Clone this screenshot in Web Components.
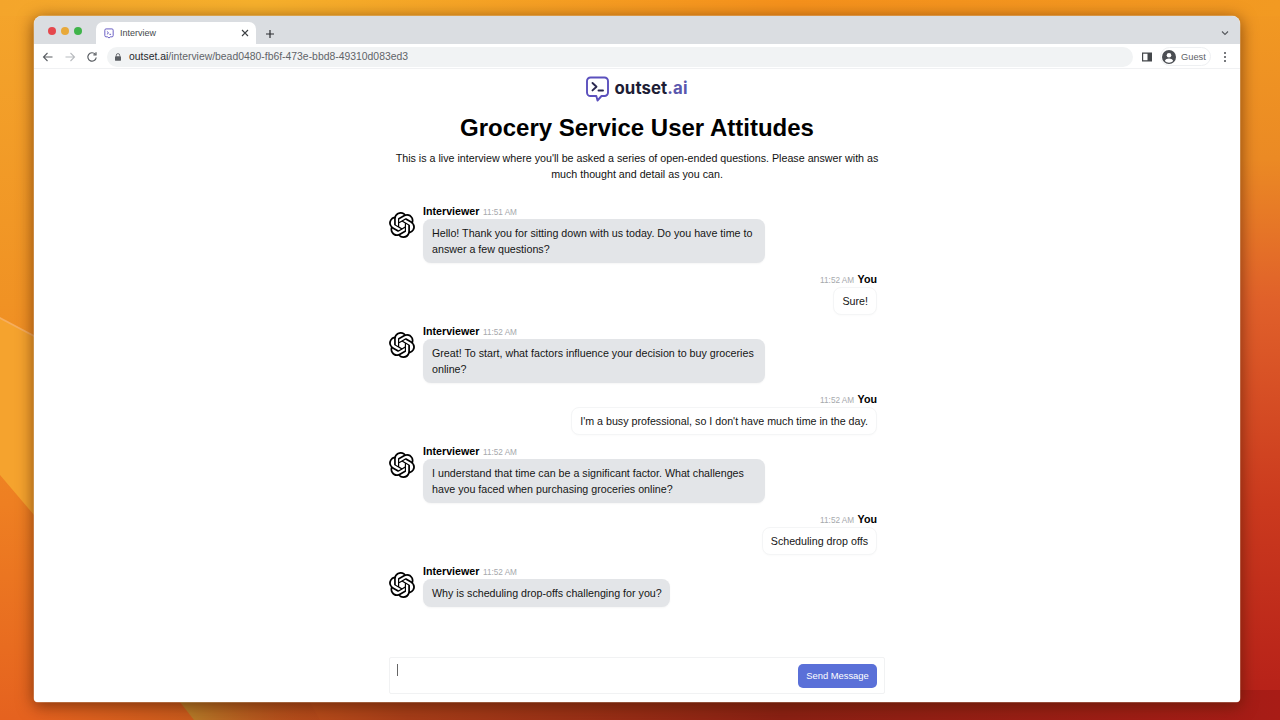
<!DOCTYPE html>
<html><head><meta charset="utf-8"><title>Interview</title>
<style>
html,body{margin:0;padding:0;height:100%;overflow:hidden;font-family:"Liberation Sans",Arial,sans-serif}
</style></head><body>
<x-desktop>
  <x-browser>
    <x-page>
      <x-logo></x-logo>
      <x-intro heading="Grocery Service User Attitudes">This is a live interview where you'll be asked a series of open-ended questions. Please answer with as much thought and detail as you can.</x-intro>
      <x-chat>
        <x-msg time="11:51 AM">Hello! Thank you for sitting down with us today. Do you have time to answer a few questions?</x-msg>
        <x-msg user time="11:52 AM">Sure!</x-msg>
        <x-msg time="11:52 AM">Great! To start, what factors influence your decision to buy groceries online?</x-msg>
        <x-msg user time="11:52 AM">I'm a busy professional, so I don't have much time in the day.</x-msg>
        <x-msg time="11:52 AM">I understand that time can be a significant factor. What challenges have you faced when purchasing groceries online?</x-msg>
        <x-msg user time="11:52 AM">Scheduling drop offs</x-msg>
        <x-msg time="11:52 AM">Why is scheduling drop-offs challenging for you?</x-msg>
      </x-chat>
      <x-composer></x-composer>
    </x-page>
  </x-browser>
</x-desktop>
<script>
function def(name,html,init){customElements.define(name,class extends HTMLElement{
  constructor(){super();const s=this.attachShadow({mode:'open'});s.innerHTML=html;}
  connectedCallback(){if(init)init(this,this.shadowRoot);}
});}
const FONT='"Liberation Sans",Arial,sans-serif';
def('x-desktop',`<style>
:host{display:block;position:relative;width:1280px;height:720px;overflow:hidden;background:#e8781e}
svg{position:absolute;inset:0;width:100%;height:100%}
</style>
<svg viewBox="0 0 1280 720" preserveAspectRatio="none">
<defs>
<linearGradient id="t" x1="0" y1="0" x2="1" y2="0"><stop offset="0" stop-color="#f4a52b"/><stop offset=".2" stop-color="#f6b02c"/><stop offset=".62" stop-color="#f5911c"/><stop offset="1" stop-color="#f29a22"/></linearGradient>
<linearGradient id="a" x1="0" y1="0" x2="0" y2="1"><stop offset="0" stop-color="#f4a52b"/><stop offset=".42" stop-color="#f09224"/><stop offset=".7" stop-color="#ee7f22"/><stop offset="1" stop-color="#e5621f"/></linearGradient>
<linearGradient id="r" x1="0" y1="0" x2="0" y2="1"><stop offset="0" stop-color="#f29a22"/><stop offset=".22" stop-color="#eb8a24"/><stop offset=".42" stop-color="#e0602a"/><stop offset=".7" stop-color="#cb3a1e"/><stop offset="1" stop-color="#b41e18"/></linearGradient>
<linearGradient id="b" x1="0" y1="0" x2="1" y2="0"><stop offset="0" stop-color="#e5621f"/><stop offset=".14" stop-color="#c65a1c"/><stop offset=".3" stop-color="#a63d18"/><stop offset=".6" stop-color="#8a2013"/><stop offset="1" stop-color="#a81c16"/></linearGradient>
<linearGradient id="g" x1="0" y1="0" x2="1" y2="0"><stop offset="0" stop-color="#b5822a"/><stop offset="1" stop-color="#a63d18" stop-opacity=".2"/></linearGradient>
</defs>
<rect width="1280" height="720" fill="url(#a)"/>
<rect x="1100" width="180" height="720" fill="url(#r)"/>
<rect width="1280" height="16" fill="url(#t)"/>
<rect x="34" y="690" width="1246" height="30" fill="url(#b)"/>
<polygon points="0,318 34,336 34,515 0,475" fill="#f5a32e"/>
<polygon points="0,317 34,335 34,337 0,319" fill="#f6ae5e"/>
<polygon points="180,702 310,702 320,720 194,720" fill="url(#g)"/>
</svg><slot></slot>`);
def('x-browser',`<style>
:host{display:flex;flex-direction:column;position:absolute;left:34px;top:16px;width:1206px;height:686px;background:#fff;border-radius:8px 8px 4px 4px;overflow:hidden;box-shadow:0 0 0 .5px rgba(255,240,220,.45),0 3px 16px 1px rgba(70,25,0,.6)}
</style><x-tabstrip></x-tabstrip><x-toolbar></x-toolbar><slot></slot>`);
def('x-tabstrip',`<style>
:host{display:flex;align-items:flex-end;height:28px;background:#dadde1;flex:none;position:relative;font:9px ${FONT};color:#45484c}
.lights{display:flex;gap:5px;padding:0 0 0 14px;align-self:flex-start;margin-top:11px;width:48px;box-sizing:content-box}
.lights i{width:8px;height:8px;border-radius:50%}
.tab{width:160px;height:22px;background:#fff;border-radius:7px 7px 0 0;display:flex;align-items:center;padding:0 7px 0 8px;box-sizing:border-box;gap:6px}
.tab span{flex:1}
.plus{margin:0 0 3px 7px;width:14px;height:14px}
.chev{margin:0 10px 6px auto;width:10px;height:10px}
</style>
<div class="lights"><i style="background:#e5484d"></i><i style="background:#e8a93a"></i><i style="background:#3fb44a"></i></div>
<div class="tab"><svg width="10" height="11" viewBox="0 0 24 26" fill="none" stroke="#6a5fc4" stroke-width="2.4"><path d="M5 2h14a3 3 0 0 1 3 3v13a3 3 0 0 1-3 3h-4l-3 3-3-3H5a3 3 0 0 1-3-3V5a3 3 0 0 1 3-3z"/><path d="M7 8l4 3.500L7 15M13 15h4"/></svg><span>Interview</span>
<svg width="8" height="8" viewBox="0 0 8 8" stroke="#3c4043" stroke-width="1.100"><path d="M1 1l6 6M7 1L1 7"/></svg></div>
<svg class="plus" viewBox="0 0 14 14" stroke="#2a2c30" stroke-width="1.200"><path d="M7 3v8M3 7h8"/></svg>
<svg class="chev" viewBox="0 0 10 10" fill="none" stroke="#55585c" stroke-width="1.100"><path d="M2 3.500l3 3 3-3"/></svg>`);
def('x-toolbar',`<style>
:host{display:flex;align-items:center;height:25px;background:#fff;flex:none;font:10.400px ${FONT};color:#5f6368;border-bottom:1px solid #f0f1f3;box-sizing:border-box;padding:1px 0 0 8px}
svg{flex:none}
.nav{display:flex;gap:10px;align-items:center;width:65px}
.url{width:1026px;height:20px;background:#f1f3f4;border-radius:10px;display:flex;align-items:center;gap:8px;padding-left:8px;box-sizing:border-box}
.url b{font-weight:400;color:#25282c}
.side{margin-left:9px}
.guest{display:flex;align-items:center;gap:5px;margin-left:8px;height:19px;width:51px;padding:0 0 0 1px;border:1px solid #eef0f2;border-radius:10px;box-sizing:border-box;font-size:9.300px}
.menu{margin-left:12px}
</style>
<div class="nav">
<svg width="12" height="12" viewBox="0 0 12 12" fill="none" stroke="#5a5e63" stroke-width="1.100"><path d="M10.500 6H1.800M5.500 2L1.500 6l4 4"/></svg>
<svg width="12" height="12" viewBox="0 0 12 12" fill="none" stroke="#b8bbbf" stroke-width="1.100"><path d="M1.500 6h8.700M6.500 2l4 4-4 4"/></svg>
<svg width="12" height="12" viewBox="0 0 12 12" fill="none" stroke="#5a5e63" stroke-width="1.200"><path d="M10.200 6.500a4.200 4.200 0 1 1-1-3.300"/><path d="M10 1.200v2.600H7.400"/></svg>
</div>
<div class="url"><svg width="6" height="8" viewBox="0 0 7 9" fill="#5a5e63"><rect y="3.500" width="7" height="5.500" rx="1"/><path d="M1.500 4V2.500a2 2 0 0 1 4 0V4" fill="none" stroke="#5a5e63"/></svg><span><b>outset.ai</b>/interview/bead0480-fb6f-473e-bbd8-49310d083ed3</span></div>
<svg class="side" width="10" height="10" viewBox="0 0 10 10" fill="#45484c"><path d="M0 .5h10v9H0zM1.200 1.700v6.600H5.500V1.700z" fill-rule="evenodd"/></svg>
<div class="guest"><svg width="14" height="14" viewBox="0 0 14 14"><circle cx="7" cy="7" r="7" fill="#4a4d52"/><circle cx="7" cy="5.200" r="2.300" fill="#fff"/><path d="M2.800 11c.8-2 2.400-2.600 4.200-2.600s3.400.6 4.200 2.600A5.800 5.800 0 0 1 7 12.800 5.800 5.800 0 0 1 2.800 11z" fill="#fff"/></svg><span>Guest</span></div>
<svg class="menu" width="4" height="12" viewBox="0 0 4 12" fill="#4a4d52"><circle cx="2" cy="2" r="1"/><circle cx="2" cy="6" r="1"/><circle cx="2" cy="10" r="1"/></svg>`);
def('x-page',`<style>
:host{display:flex;flex-direction:column;align-items:center;flex:1;min-height:0;background:#fff;padding:7px 0 8px;box-sizing:border-box}
.col{width:496px;display:flex;flex-direction:column;flex:1}
</style><div class="col"><slot></slot></div>`);
def('x-logo',`<style>
:host{display:flex;align-items:center;justify-content:center;gap:5px;height:26px}
.t{font:700 16.800px/20px Inter,"Open Sans",sans-serif;color:#1d1d35;margin-bottom:3px;letter-spacing:.1px}
.t span{color:#5a57ad}
</style>
<svg width="23" height="26" viewBox="0 0 23 26" fill="none" stroke="#5b50bd" stroke-width="1.900" stroke-linejoin="round" stroke-linecap="round"><path d="M4.500 1.500h14a3.500 3.500 0 0 1 3.500 3.500v11.500a3.500 3.500 0 0 1-3.500 3.500H15.500l-4 4.500-1.200-4.500H4.500A3.500 3.500 0 0 1 1 16.500V5a3.500 3.500 0 0 1 3.500-3.500z"/><path d="M6.500 7l4 3.700-4 3.700" stroke="#2a2850"/><path d="M12.500 14.500h4.500" stroke="#2a2850"/></svg>
<div class="t">outset<span>.ai</span></div>`);
def('x-intro',`<style>
:host{display:block;text-align:center;color:#111}
h1{margin:12px 0 8px;font:700 24px/28px ${FONT};color:#000}
p{margin:0 auto;font:10.700px/16px ${FONT};width:490px}
</style><h1></h1><p><slot></slot></p>`,(el,s)=>{s.querySelector('h1').textContent=el.getAttribute('heading');});
def('x-chat',`<style>
:host{display:flex;flex-direction:column;gap:8px;margin-top:21px;width:488px}
</style><slot></slot>`);
const AV='M22.2819 9.8211a5.9847 5.9847 0 0 0-.5157-4.9108 6.0462 6.0462 0 0 0-6.5098-2.9A6.0651 6.0651 0 0 0 4.9807 4.1818a5.9847 5.9847 0 0 0-3.9977 2.9 6.0462 6.0462 0 0 0 .7427 7.0966 5.98 5.98 0 0 0 .511 4.9107 6.051 6.051 0 0 0 6.5146 2.9001A5.9847 5.9847 0 0 0 13.2599 24a6.0557 6.0557 0 0 0 5.7718-4.2058 5.9894 5.9894 0 0 0 3.9977-2.9001 6.0557 6.0557 0 0 0-.7475-7.0729zm-9.022 12.6081a4.4755 4.4755 0 0 1-2.8764-1.0408l.1419-.0804 4.7783-2.7582a.7948.7948 0 0 0 .3927-.6813v-6.7369l2.02 1.1686a.071.071 0 0 1 .038.052v5.5826a4.504 4.504 0 0 1-4.4945 4.4944zm-9.6607-4.1254a4.4708 4.4708 0 0 1-.5346-3.0137l.142.0852 4.783 2.7582a.7712.7712 0 0 0 .7806 0l5.8428-3.3685v2.3324a.0804.0804 0 0 1-.0332.0615L9.74 19.9502a4.4992 4.4992 0 0 1-6.1408-1.6464zM2.3408 7.8956a4.485 4.485 0 0 1 2.3655-1.9728V11.6a.7664.7664 0 0 0 .3879.6765l5.8144 3.3543-2.0201 1.1685a.0757.0757 0 0 1-.071 0l-4.8303-2.7865A4.504 4.504 0 0 1 2.3408 7.872zm16.5963 3.8558L13.1038 8.364 15.1192 7.2a.0757.0757 0 0 1 .071 0l4.8303 2.7913a4.4944 4.4944 0 0 1-.6765 8.1042v-5.6772a.79.79 0 0 0-.407-.667zm2.0107-3.0231l-.142-.0852-4.7735-2.7818a.7759.7759 0 0 0-.7854 0L9.409 9.2297V6.8974a.0662.0662 0 0 1 .0284-.0615l4.8303-2.7866a4.4992 4.4992 0 0 1 6.6802 4.66zM8.3065 12.863l-2.02-1.1638a.0804.0804 0 0 1-.038-.0567V6.0742a4.4992 4.4992 0 0 1 7.3757-3.4537l-.142.0805L8.704 5.459a.7948.7948 0 0 0-.3927.6813zm1.0976-2.3654l2.602-1.4998 2.6069 1.4998v2.9994l-2.5974 1.4997-2.6067-1.4997Z';
def('x-msg',`<style>
:host{display:flex;gap:8px;color:#151515}
:host([user]){justify-content:flex-end}
.av{flex:none;width:26px;height:26px;margin-top:9px}
:host([user]) .av{display:none}
.b{display:flex;flex-direction:column;max-width:342px;align-items:flex-start}
:host([user]) .b{align-items:flex-end;max-width:none}
.h{display:flex;align-items:baseline;gap:3.500px;height:16px;line-height:16px}
:host([user]) .h{flex-direction:row-reverse}
.n{font:700 10.700px/16px ${FONT};color:#000}
.t{font:8.200px/16px ${FONT};color:#a6a9ad}
.m{font:10.700px/16px ${FONT};padding:6px 8px 6px 9px;background:#e3e5e8;border-radius:8px;box-shadow:0 1px 2px rgba(0,0,0,.04);box-sizing:border-box}
:host(:not([user])) .m.long{width:342px}
:host([user]) .m{background:#fff;border:1px solid #f4f5f6;padding:5px 8px;box-shadow:0 1px 2px rgba(0,0,0,.02)}
</style>
<svg class="av" viewBox="0 0 24 24" fill="#000"><path d="${AV}"/></svg>
<div class="b"><div class="h"><span class="n"></span><span class="t"></span></div><div class="m"><slot></slot></div></div>`,(el,s)=>{
  s.querySelector('.n').textContent=el.hasAttribute('user')?'You':'Interviewer';
  s.querySelector('.t').textContent=el.getAttribute('time');
  if(el.textContent.length>60)s.querySelector('.m').classList.add('long');
});
def('x-composer',`<style>
:host{display:flex;align-items:flex-start;justify-content:space-between;box-sizing:border-box;width:496px;height:37px;margin-top:auto;border:1px solid #f1f2f3;border-radius:2px;padding:6px 7px 0 7px}
i{display:block;width:1px;height:12px;background:#666}
button{all:unset;box-sizing:border-box;width:79px;height:24px;background:#5a70d8;color:#fff;border-radius:5px;font:9.400px/24px ${FONT};text-align:center}
</style><i></i><button>Send Message</button>`);
</script>
</body></html>
